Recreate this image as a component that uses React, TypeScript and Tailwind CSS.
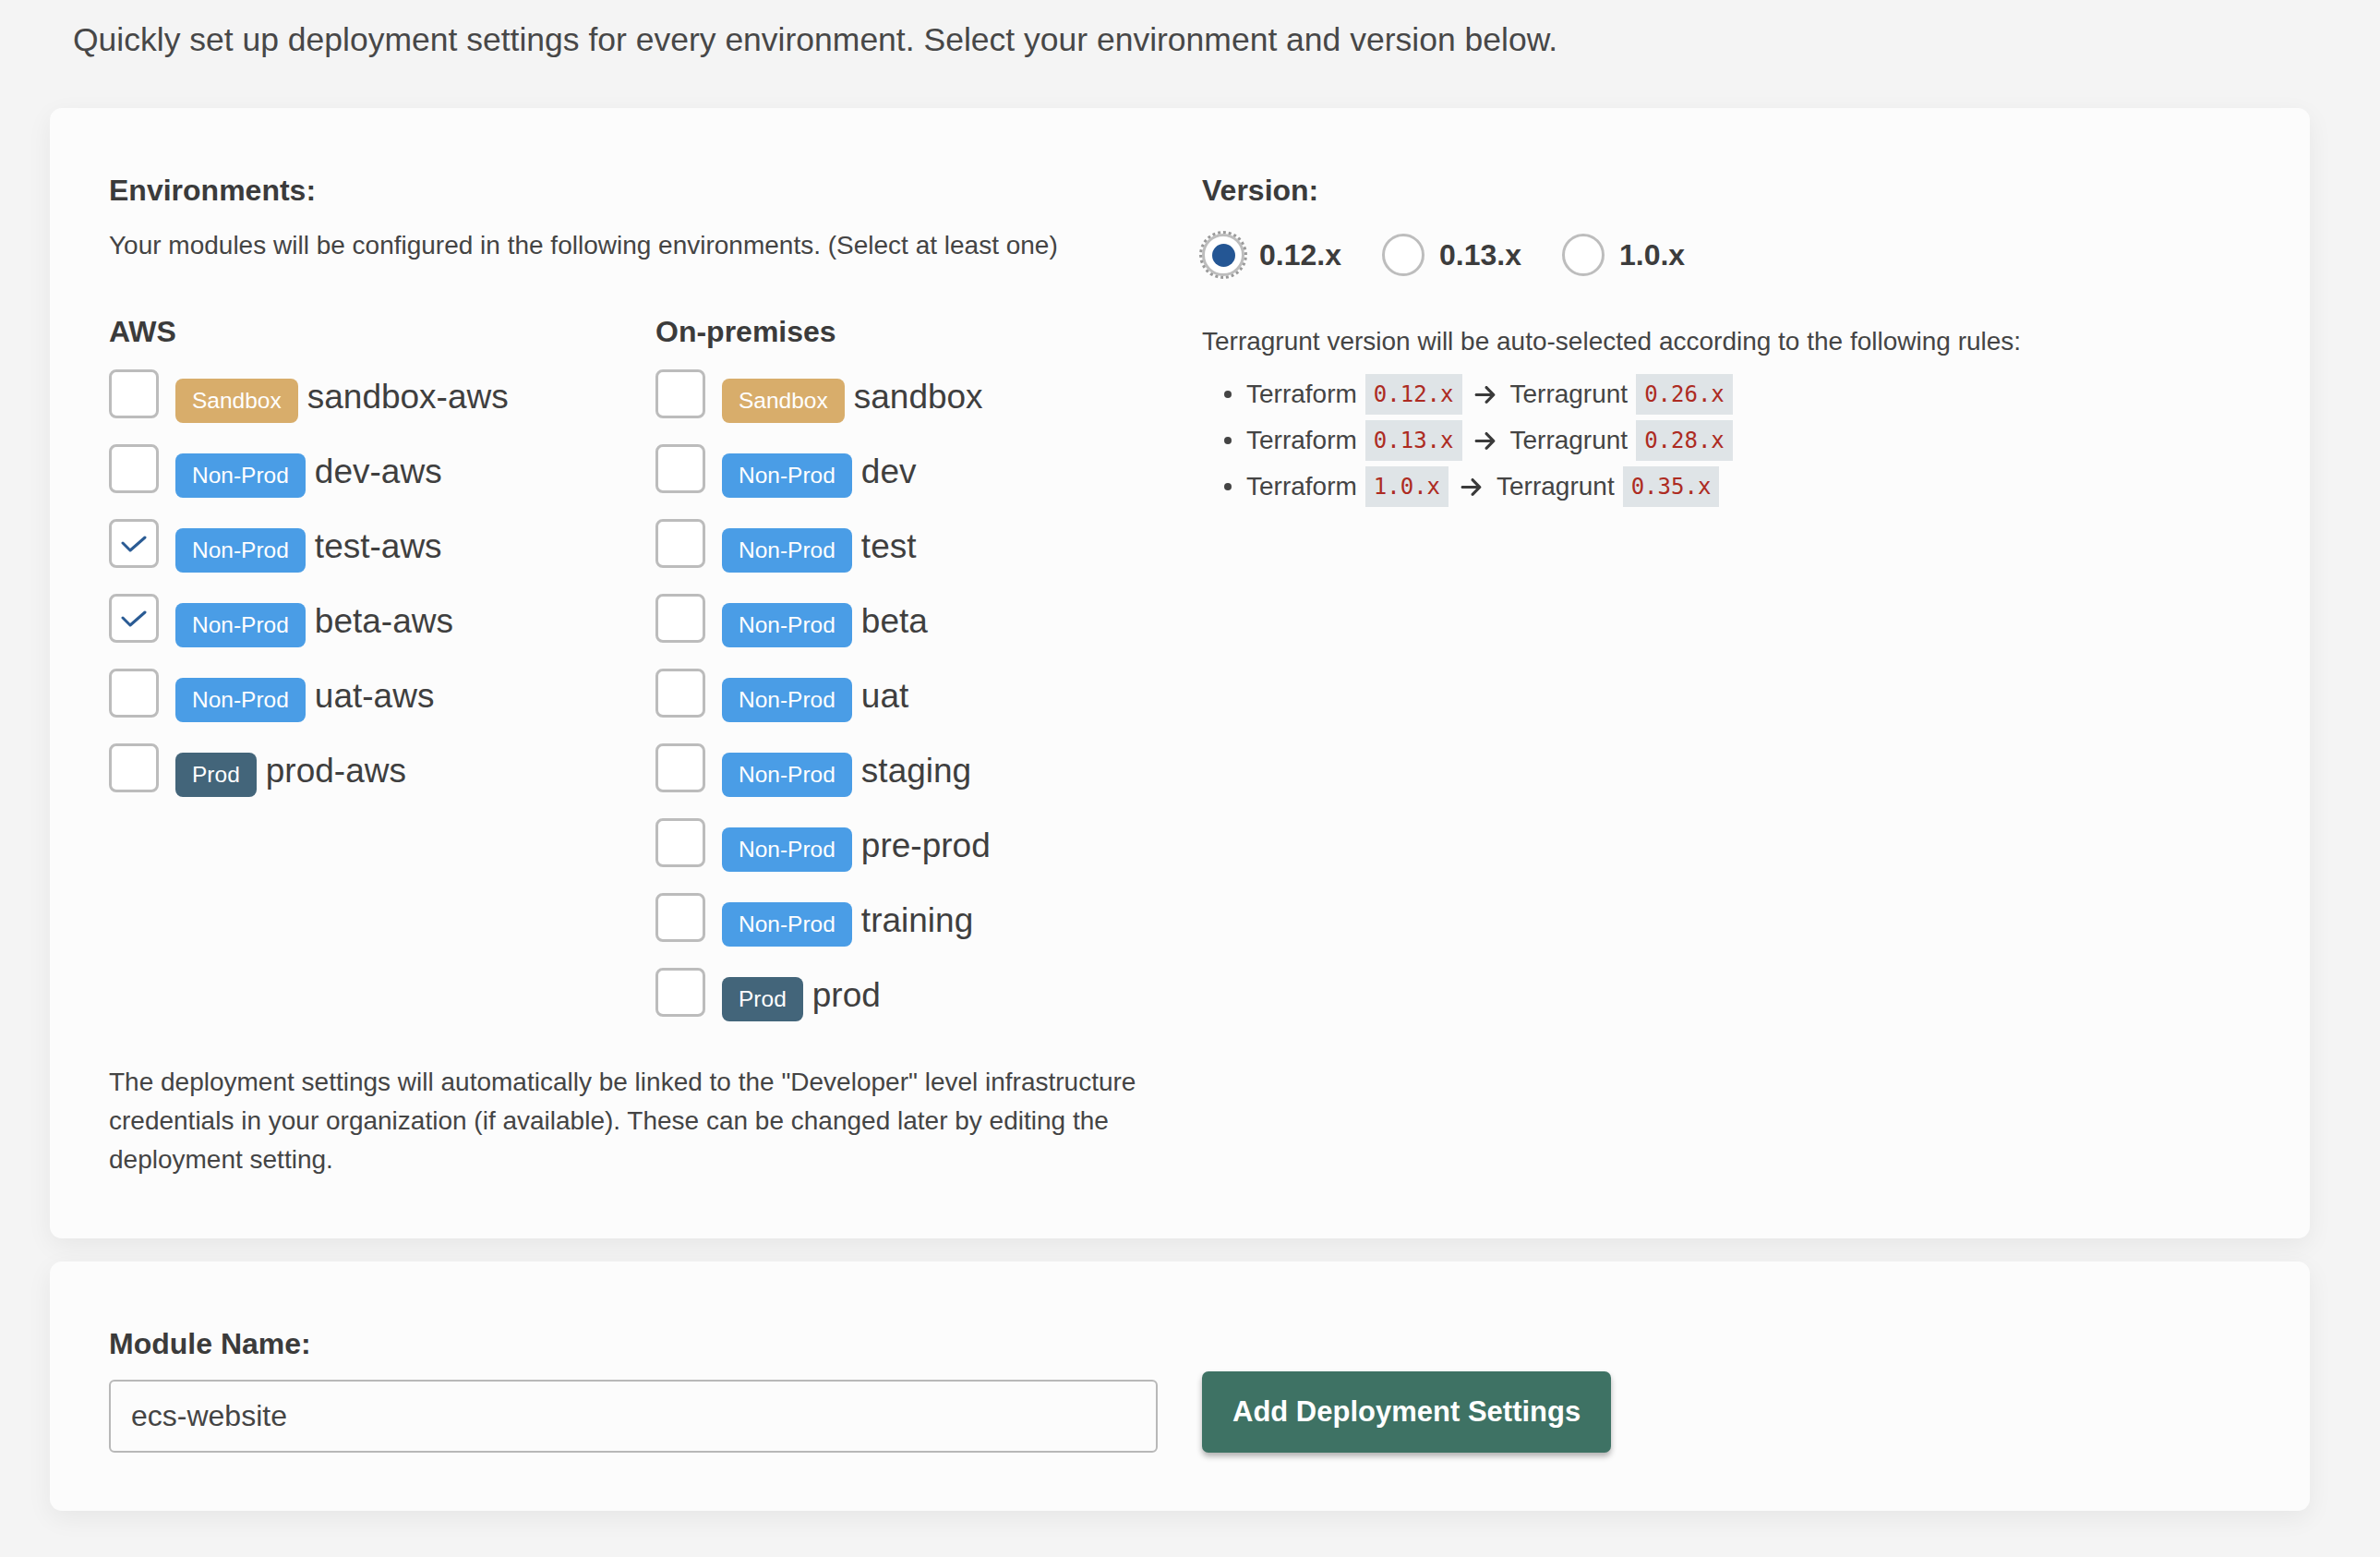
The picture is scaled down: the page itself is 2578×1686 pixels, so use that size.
import React from "react";

type Kind = "Sandbox" | "Non-Prod" | "Prod";

const badgeClass: Record<Kind, string> = {
  Sandbox: "bg-[#d8ad6b]",
  "Non-Prod": "bg-[#4a9de6]",
  Prod: "bg-[#43657a]",
};

function Check() {
  return (
    <svg width="28" height="18" viewBox="0 0 28 18" fill="none">
      <path d="M2 8 L10 16 L26 2" stroke="#2a5b94" strokeWidth="3" strokeLinecap="round" strokeLinejoin="round" />
    </svg>
  );
}

function EnvRow({ kind, name, checked }: { kind: Kind; name: string; checked?: boolean }) {
  return (
    <div className="flex items-start h-[81px]">
      <div className="w-[54px] h-[53px] shrink-0 rounded-[8px] border-[3px] border-[#bcbcbc] bg-white flex items-center justify-center">
        {checked ? <Check /> : null}
      </div>
      <div className="ml-[18px] mt-[10px] flex items-baseline">
        <span className={`${badgeClass[kind]} h-[48px] leading-[48px] px-[18px] rounded-[8px] text-[24.5px] text-white`}>
          {kind}
        </span>
        <span className="ml-[10px] text-[37px] leading-[40px] text-[#3f3f3f]">{name}</span>
      </div>
    </div>
  );
}

function Radio({ label, selected }: { label: string; selected?: boolean }) {
  return (
    <div className="flex items-center">
      <div
        className={`w-[46px] h-[46px] rounded-full border-[3px] border-[#bdbdbd] bg-white flex items-center justify-center ${
          selected ? "outline-dotted outline-[3px] outline-[#9a9a9a] outline-offset-[0px]" : ""
        }`}
      >
        {selected ? <div className="w-[25px] h-[25px] rounded-full bg-[#245694]" /> : null}
      </div>
      <span className="ml-[16px] text-[32px] font-bold text-[#3c3c3c]">{label}</span>
    </div>
  );
}

function Code({ children }: { children: React.ReactNode }) {
  return (
    <span className="inline-block h-[44px] leading-[44px] px-[9px] bg-[#dfe4e7] text-[#ad2b22] text-[24px] font-['DejaVu_Sans_Mono','Liberation_Mono',monospace]">
      {children}
    </span>
  );
}

function Arrow() {
  return (
    <svg width="25" height="25" viewBox="0 0 448 512" className="mx-[12px]">
      <path
        fill="#3a3a3a"
        d="M438.6 278.6c12.5-12.5 12.5-32.8 0-45.3l-160-160c-12.5-12.5-32.8-12.5-45.3 0s-12.5 32.8 0 45.3L338.8 224 32 224c-17.7 0-32 14.3-32 32s14.3 32 32 32l306.7 0L233.4 393.4c-12.5 12.5-12.5 32.8 0 45.3s32.8 12.5 45.3 0l160-160z"
      />
    </svg>
  );
}

function Rule({ tf, tg }: { tf: string; tg: string }) {
  return (
    <li className="flex items-center h-[50px] text-[28px] text-[#444]">
      <span className="ml-[24px] mr-[16px] w-[8px] h-[8px] rounded-full bg-[#444]" />
      <span>Terraform</span>
      <span className="ml-[9px] flex">
        <Code>{tf}</Code>
      </span>
      <Arrow />
      <span className="ml-[3px]">Terragrunt</span>
      <span className="ml-[9px] flex">
        <Code>{tg}</Code>
      </span>
    </li>
  );
}

export default function App() {
  const aws: { kind: Kind; name: string; checked?: boolean }[] = [
    { kind: "Sandbox", name: "sandbox-aws" },
    { kind: "Non-Prod", name: "dev-aws" },
    { kind: "Non-Prod", name: "test-aws", checked: true },
    { kind: "Non-Prod", name: "beta-aws", checked: true },
    { kind: "Non-Prod", name: "uat-aws" },
    { kind: "Prod", name: "prod-aws" },
  ];
  const onprem: { kind: Kind; name: string }[] = [
    { kind: "Sandbox", name: "sandbox" },
    { kind: "Non-Prod", name: "dev" },
    { kind: "Non-Prod", name: "test" },
    { kind: "Non-Prod", name: "beta" },
    { kind: "Non-Prod", name: "uat" },
    { kind: "Non-Prod", name: "staging" },
    { kind: "Non-Prod", name: "pre-prod" },
    { kind: "Non-Prod", name: "training" },
    { kind: "Prod", name: "prod" },
  ];

  return (
    <div className="min-h-screen bg-[#f4f4f4] font-['Liberation_Sans',Arial,sans-serif] text-[#444]">
      <div className="px-[54px] pt-[22px] pb-[50px] w-[2556px]">
        <p className="pl-[25px] text-[35.5px] leading-[42px] text-[#474747]">
          Quickly set up deployment settings for every environment. Select your environment and version below.
        </p>

        <div className="mt-[53px] rounded-[13px] bg-[#fcfcfc] shadow-[0_8px_28px_rgba(0,0,0,0.06)] px-[64px] pt-[70px] pb-[64px] grid grid-cols-2 gap-x-[48px]">
          <div>
            <h2 className="text-[32px] leading-[38px] font-bold text-[#3b3b3b]">Environments:</h2>
            <p className="mt-[20px] text-[28px] leading-[42px] text-[#444]">
              Your modules will be configured in the following environments. (Select at least one)
            </p>
            <div className="mt-[53px] grid grid-cols-[592px_1fr]">
              <div>
                <h3 className="text-[32px] leading-[38px] font-bold text-[#3b3b3b]">AWS</h3>
                <div className="mt-[22px]">
                  {aws.map((r) => (
                    <EnvRow key={r.name} {...r} />
                  ))}
                </div>
              </div>
              <div>
                <h3 className="text-[32px] leading-[38px] font-bold text-[#3b3b3b]">On-premises</h3>
                <div className="mt-[22px]">
                  {onprem.map((r) => (
                    <EnvRow key={r.name} {...r} />
                  ))}
                </div>
              </div>
            </div>
            <p className="mt-[22px] text-[28px] leading-[42px] text-[#444]">
              The deployment settings will automatically be linked to the "Developer" level infrastructure credentials in
              your organization (if available). These can be changed later by editing the deployment setting.
            </p>
          </div>

          <div>
            <h2 className="text-[32px] leading-[38px] font-bold text-[#3b3b3b]">Version:</h2>
            <div className="mt-[27px] flex items-center gap-x-[44px]">
              <Radio label="0.12.x" selected />
              <Radio label="0.13.x" />
              <Radio label="1.0.x" />
            </div>
            <p className="mt-[49px] text-[28px] leading-[42px] text-[#444]">
              Terragrunt version will be auto-selected according to the following rules:
            </p>
            <ul className="mt-[11px]">
              <Rule tf="0.12.x" tg="0.26.x" />
              <Rule tf="0.13.x" tg="0.28.x" />
              <Rule tf="1.0.x" tg="0.35.x" />
            </ul>
          </div>
        </div>

        <div className="mt-[25px] rounded-[13px] bg-[#fcfcfc] shadow-[0_8px_28px_rgba(0,0,0,0.06)] px-[64px] pt-[70px] pb-[63px]">
          <label className="block text-[32px] leading-[38px] font-bold text-[#3b3b3b]">Module Name:</label>
          <div className="mt-[11px] grid grid-cols-2 gap-x-[48px] items-end">
            <input
              readOnly
              value="ecs-website"
              className="h-[79px] w-full rounded-[6px] border-2 border-[#b8b8b8] bg-[#fcfcfc] px-[22px] text-[32px] text-[#444] outline-none font-['Liberation_Sans',Arial,sans-serif]"
            />
            <div>
              <button className="h-[88px] px-[33px] rounded-[7px] bg-[#3e7264] text-white text-[31px] font-bold shadow-[0_4px_6px_rgba(0,0,0,0.3)]">
                Add Deployment Settings
              </button>
            </div>
          </div>
        </div>
      </div>
    </div>
  );
}
